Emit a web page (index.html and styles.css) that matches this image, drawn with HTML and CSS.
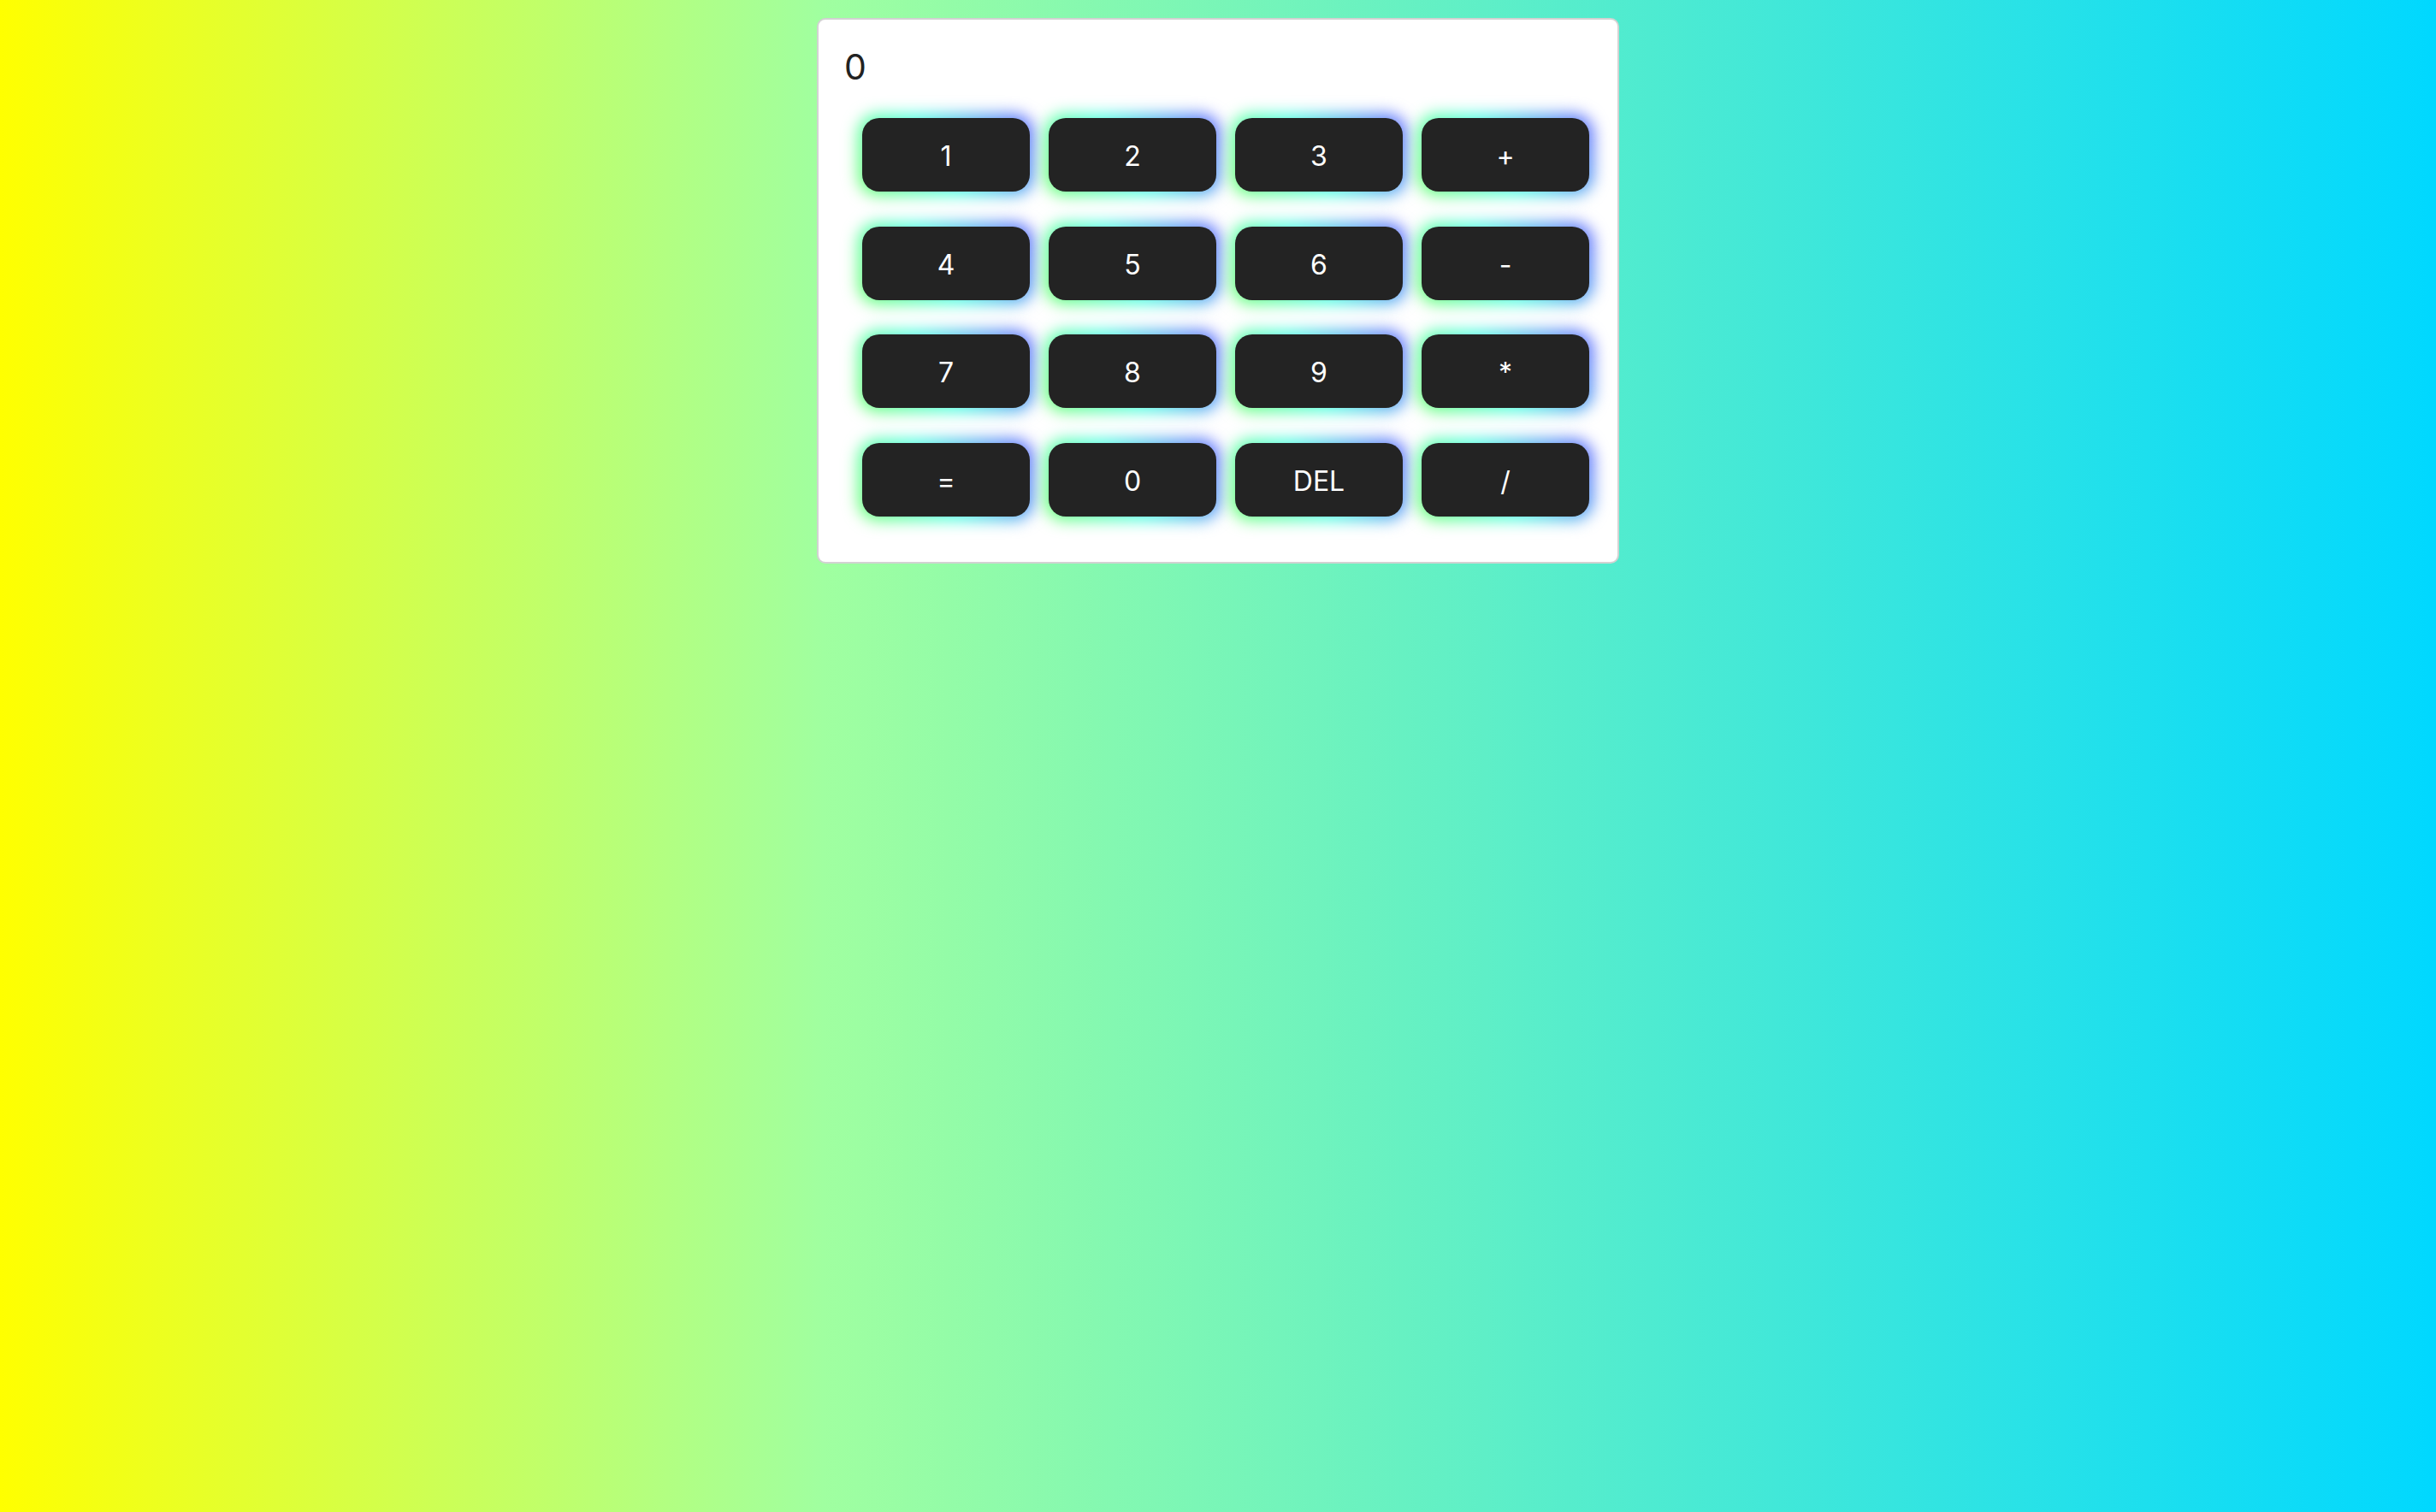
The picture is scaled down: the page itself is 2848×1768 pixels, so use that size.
FILE: index.html
```html
<!DOCTYPE html>
<html>
<head>
<meta charset="utf-8">
<link rel="stylesheet" href="styles.css">
</head>
<body>
<div class="calc">
  <div class="display">0</div>
  <div class="keys">
    <button class="key">1</button>
    <button class="key">2</button>
    <button class="key">3</button>
    <button class="key">+</button>
    <button class="key">4</button>
    <button class="key">5</button>
    <button class="key">6</button>
    <button class="key">-</button>
    <button class="key">7</button>
    <button class="key">8</button>
    <button class="key">9</button>
    <button class="key">*</button>
    <button class="key">=</button>
    <button class="key">0</button>
    <button class="key">DEL</button>
    <button class="key">/</button>
  </div>
</div>
</body>
</html>
```
FILE: styles.css
```css
html, body {
  margin: 0;
  padding: 0;
}
body {
  min-height: 100vh;
  background: linear-gradient(to right, #ffff00 0%, #a0ffa0 33.8%, #00d8ff 100%);
  font-family: Inter, "Noto Sans", sans-serif;
  padding-top: 21px;
  box-sizing: border-box;
}
.calc {
  width: 938px;
  margin: 0 auto;
  box-sizing: border-box;
  background: #fff;
  border: 2px solid #d2d2d2;
  border-radius: 10px;
  padding: 30px 33px 53px 30px;
  isolation: isolate;
}
.display {
  font-size: 41px;
  line-height: 50px;
  color: #222;
  margin-bottom: 35px;
}
.keys {
  display: grid;
  grid-template-columns: repeat(4, 196px);
  grid-auto-rows: 86px;
  column-gap: 22px;
  row-gap: 40.5px;
  margin-left: 21px;
}
.key {
  position: relative;
  border: none;
  background: #232323;
  color: #fff;
  border-radius: 20px;
  font-family: Inter, "Noto Sans", sans-serif;
  font-size: 32px;
  padding: 3px 0 0;
  cursor: pointer;
}
.key::before {
  content: "";
  position: absolute;
  inset: -5px;
  border-radius: 24px;
  background: linear-gradient(60deg, #6dff6d 0%, #50ffe0 45%, #5f5fff 100%);
  filter: blur(9px);
  z-index: -1;
}
```
